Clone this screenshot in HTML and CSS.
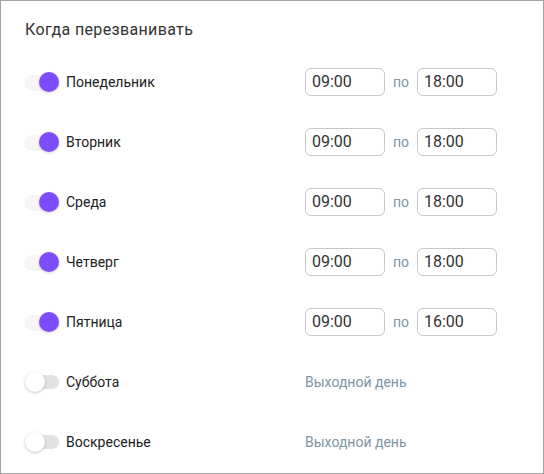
FILE: index.html
```html
<!DOCTYPE html>
<html lang="ru">
<head>
<meta charset="utf-8">
<link rel="stylesheet" href="styles.css">
</head>
<body>
<div class="panel">
  <div class="title">Когда перезванивать</div>
  <div class="rows">
    <div class="row">
      <div class="day"><span class="switch on"><span class="thumb"></span></span><span class="name">Понедельник</span></div>
      <div class="times"><span class="time">09:00</span><span class="sep">по</span><span class="time">18:00</span></div>
    </div>
    <div class="row">
      <div class="day"><span class="switch on"><span class="thumb"></span></span><span class="name">Вторник</span></div>
      <div class="times"><span class="time">09:00</span><span class="sep">по</span><span class="time">18:00</span></div>
    </div>
    <div class="row">
      <div class="day"><span class="switch on"><span class="thumb"></span></span><span class="name">Среда</span></div>
      <div class="times"><span class="time">09:00</span><span class="sep">по</span><span class="time">18:00</span></div>
    </div>
    <div class="row">
      <div class="day"><span class="switch on"><span class="thumb"></span></span><span class="name">Четверг</span></div>
      <div class="times"><span class="time">09:00</span><span class="sep">по</span><span class="time">18:00</span></div>
    </div>
    <div class="row">
      <div class="day"><span class="switch on"><span class="thumb"></span></span><span class="name">Пятница</span></div>
      <div class="times"><span class="time">09:00</span><span class="sep">по</span><span class="time">16:00</span></div>
    </div>
    <div class="row">
      <div class="day"><span class="switch"><span class="thumb"></span></span><span class="name">Суббота</span></div>
      <div class="times"><span class="off">Выходной день</span></div>
    </div>
    <div class="row">
      <div class="day"><span class="switch"><span class="thumb"></span></span><span class="name">Воскресенье</span></div>
      <div class="times"><span class="off">Выходной день</span></div>
    </div>
  </div>
</div>
</body>
</html>
```
FILE: styles.css
```css
html, body {
  margin: 0;
  padding: 0;
  background: #fff;
}
body {
  font-family: Roboto, "Liberation Sans", sans-serif;
  color: #222;
}
.panel {
  box-sizing: border-box;
  width: 544px;
  height: 474px;
  border: 1px solid #a3a3a3;
  padding: 19px 0 0 24px;
}
.title {
  font-size: 16px;
  line-height: 20px;
  letter-spacing: 0.35px;
  color: #333;
}
.rows {
  margin-top: 12px;
}
.row {
  display: flex;
  align-items: center;
  height: 60px;
}
.day {
  display: flex;
  align-items: center;
  width: 280px;
}
.switch {
  position: relative;
  display: block;
  width: 34px;
  height: 14px;
  border-radius: 7px;
  background: #e2e2e2;
}
.switch.on {
  background: #f7f7f7;
  box-shadow: 0 1px 2px rgba(0,0,0,0.08);
}
.thumb {
  position: absolute;
  top: -3px;
  left: 0;
  width: 20px;
  height: 20px;
  border-radius: 50%;
  background: #fff;
  box-shadow: 0 1px 3px rgba(0,0,0,0.22);
}
.switch.on .thumb {
  left: 14px;
  background: #7c4dff;
  box-shadow: 0 1px 3px rgba(0,0,0,0.18);
}
.name {
  margin-left: 7px;
  font-size: 14px;
  color: #222;
}
.times {
  display: flex;
  align-items: center;
}
.time {
  box-sizing: border-box;
  width: 80px;
  height: 28px;
  border: 1px solid #c8c8c8;
  border-radius: 6px;
  padding: 0 6px;
  font-size: 16px;
  line-height: 26px;
  color: #333;
}
.sep {
  width: 32px;
  text-align: center;
  font-size: 14px;
  color: #7d94a4;
}
.off {
  font-size: 14px;
  color: #7d94a4;
}
```
